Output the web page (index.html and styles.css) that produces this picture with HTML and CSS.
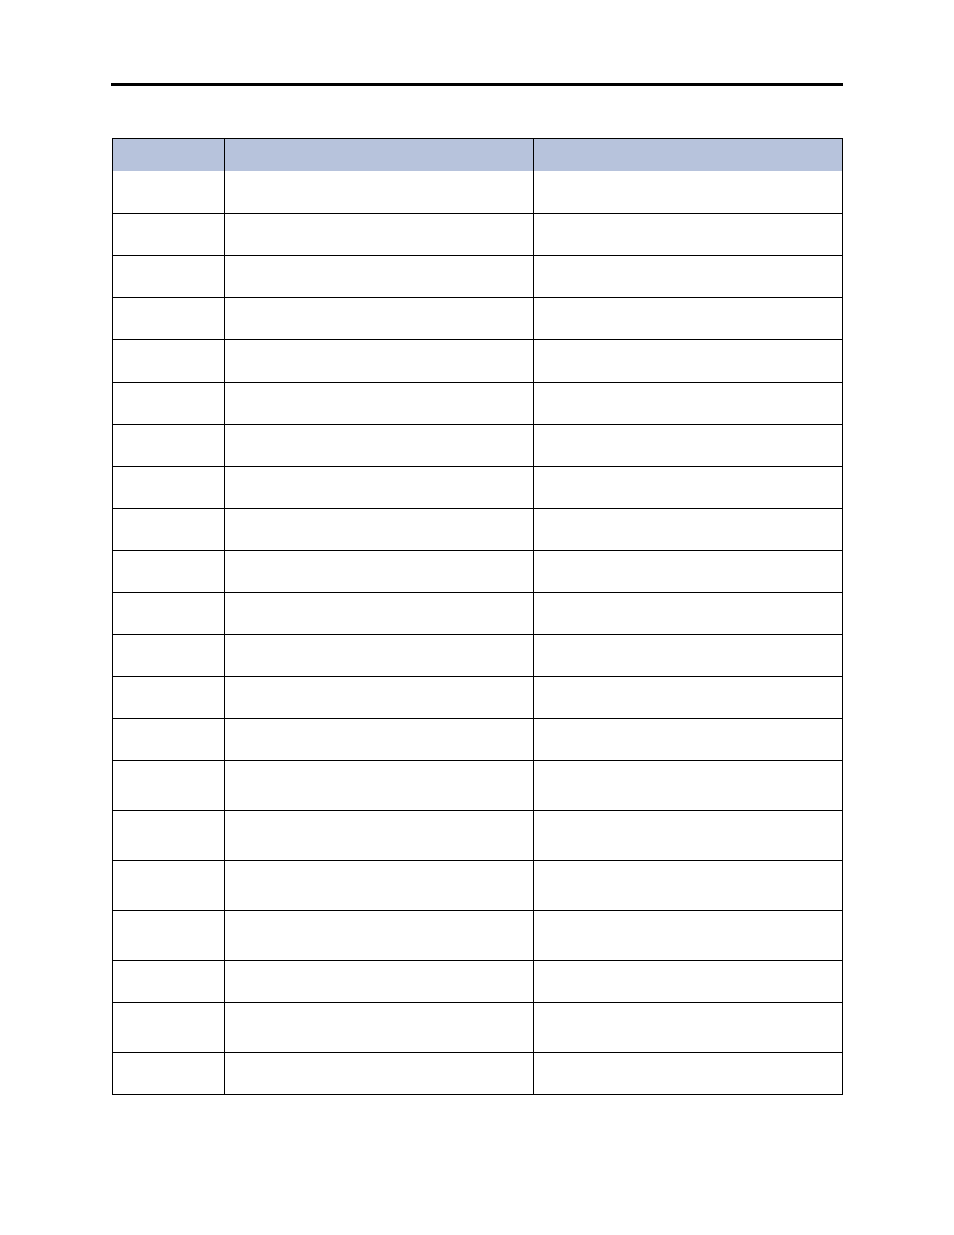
FILE: index.html
```html
<!DOCTYPE html>
<html lang="en">
<head>
<meta charset="utf-8">
<title>Table</title>
<link rel="stylesheet" href="styles.css">
</head>
<body>
<div class="page">
  <div class="rule"></div>
  <div class="table">
    <div class="row head"><div class="cell c1"></div><div class="cell c2"></div><div class="cell c3"></div></div>
    <div class="row r43"><div class="cell c1"></div><div class="cell c2"></div><div class="cell c3"></div></div>
    <div class="row r42"><div class="cell c1"></div><div class="cell c2"></div><div class="cell c3"></div></div>
    <div class="row r42"><div class="cell c1"></div><div class="cell c2"></div><div class="cell c3"></div></div>
    <div class="row r42"><div class="cell c1"></div><div class="cell c2"></div><div class="cell c3"></div></div>
    <div class="row r43"><div class="cell c1"></div><div class="cell c2"></div><div class="cell c3"></div></div>
    <div class="row r42"><div class="cell c1"></div><div class="cell c2"></div><div class="cell c3"></div></div>
    <div class="row r42"><div class="cell c1"></div><div class="cell c2"></div><div class="cell c3"></div></div>
    <div class="row r42"><div class="cell c1"></div><div class="cell c2"></div><div class="cell c3"></div></div>
    <div class="row r42"><div class="cell c1"></div><div class="cell c2"></div><div class="cell c3"></div></div>
    <div class="row r42"><div class="cell c1"></div><div class="cell c2"></div><div class="cell c3"></div></div>
    <div class="row r42"><div class="cell c1"></div><div class="cell c2"></div><div class="cell c3"></div></div>
    <div class="row r42"><div class="cell c1"></div><div class="cell c2"></div><div class="cell c3"></div></div>
    <div class="row r42"><div class="cell c1"></div><div class="cell c2"></div><div class="cell c3"></div></div>
    <div class="row r42"><div class="cell c1"></div><div class="cell c2"></div><div class="cell c3"></div></div>
    <div class="row r50"><div class="cell c1"></div><div class="cell c2"></div><div class="cell c3"></div></div>
    <div class="row r50"><div class="cell c1"></div><div class="cell c2"></div><div class="cell c3"></div></div>
    <div class="row r50"><div class="cell c1"></div><div class="cell c2"></div><div class="cell c3"></div></div>
    <div class="row r50"><div class="cell c1"></div><div class="cell c2"></div><div class="cell c3"></div></div>
    <div class="row r42"><div class="cell c1"></div><div class="cell c2"></div><div class="cell c3"></div></div>
    <div class="row r50"><div class="cell c1"></div><div class="cell c2"></div><div class="cell c3"></div></div>
    <div class="row r42"><div class="cell c1"></div><div class="cell c2"></div><div class="cell c3"></div></div>
  </div>
</div>
</body>
</html>
```
FILE: styles.css
```css
html, body {
  margin: 0;
  padding: 0;
  background: #ffffff;
  font-family: "Liberation Sans", Arial, sans-serif;
}

.page {
  padding-top: 83px;
  padding-left: 111px;
}

.rule {
  width: 732px;
  height: 3px;
  background: #000000;
}

.table {
  margin-top: 52px;
  margin-left: 1px;
  width: 731px;
  box-sizing: border-box;
  border-left: 1px solid #000000;
  border-top: 1px solid #000000;
  display: flex;
  flex-direction: column;
}

.row {
  display: flex;
}

.cell {
  box-sizing: border-box;
  height: 100%;
  border-right: 1px solid #000000;
  border-bottom: 1px solid #000000;
}

.c1 { width: 112px; }
.c2 { width: 309px; }
.c3 { width: 309px; }

.head { height: 32px; }
.head .cell {
  background: #b7c3dc;
  border-bottom: none;
}

.r42 { height: 42px; }
.r43 { height: 43px; }
.r50 { height: 50px; }
```
